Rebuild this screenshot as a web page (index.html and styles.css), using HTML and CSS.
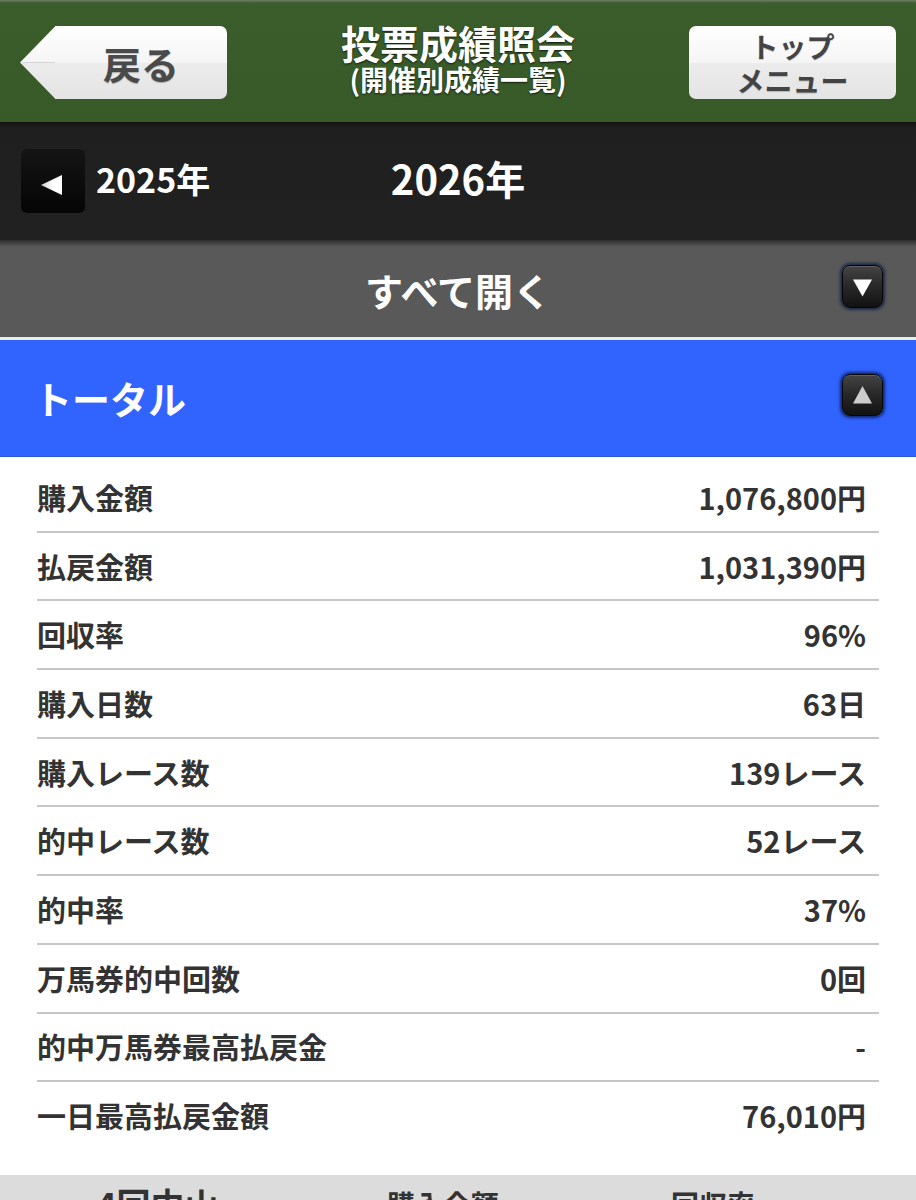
FILE: index.html
```html
<!DOCTYPE html>
<html lang="ja">
<head>
<meta charset="utf-8">
<title>投票成績照会</title>
<link rel="stylesheet" href="styles.css">
</head>
<body>
<header class="topbar">
  <a class="back-btn">
    <svg class="back-tip" width="35" height="73" viewBox="0 0 35 73">
      <defs>
        <linearGradient id="gloss" x1="0" y1="0" x2="0" y2="1">
          <stop offset="0" stop-color="#ffffff"/>
          <stop offset="0.5" stop-color="#f5f5f5"/>
          <stop offset="0.5" stop-color="#ececec"/>
          <stop offset="1" stop-color="#e4e4e4"/>
        </linearGradient>
      </defs>
      <polygon points="35.5,0 0,36.5 35.5,73" fill="url(#gloss)"/>
      <line x1="2" y1="36.5" x2="35" y2="36.5" stroke="#d4d4d4" stroke-width="1"/>
    </svg>
    <span class="back-body">戻る</span>
  </a>
  <div class="title">
    <div class="title-main">投票成績照会</div>
    <div class="title-sub">(開催別成績一覧)</div>
  </div>
  <a class="menu-btn"><span>トップ</span><span>メニュー</span></a>
</header>

<div class="yearbar">
  <div class="year-prev">
    <span class="prev-btn">
      <svg width="64" height="64" viewBox="0 0 64 64">
        <defs>
          <linearGradient id="triw" x1="0" y1="0" x2="1" y2="0">
            <stop offset="0" stop-color="#d0d0d0"/>
            <stop offset="0.6" stop-color="#ffffff"/>
            <stop offset="1" stop-color="#ffffff"/>
          </linearGradient>
        </defs>
        <polygon points="41,26 20,36 41,46" fill="url(#triw)"/>
      </svg>
    </span>
    <span class="year-prev-label">2025年</span>
  </div>
  <div class="year-current">2026年</div>
  <div class="year-next"></div>
</div>

<div class="expand-bar">
  <span class="expand-spacer"></span>
  <span class="expand-label">すべて開く</span>
  <span class="expand-toggle">
    <span class="toggle-btn">
      <svg width="41" height="43" viewBox="0 0 41 43">
        <polygon points="11,14.5 30,14.5 20.5,31.5" fill="#ffffff"/>
      </svg>
    </span>
  </span>
</div>

<div class="total-bar">
  <span class="total-label">トータル</span>
  <span class="toggle-btn toggle-up">
    <svg width="41" height="42" viewBox="0 0 41 42">
      <polygon points="11,29.5 30,29.5 20.5,12" fill="#cdcdcd"/>
    </svg>
  </span>
</div>

<dl class="stats">
  <div class="stat-row"><dt>購入金額</dt><dd>1,076,800円</dd></div>
  <div class="stat-row"><dt>払戻金額</dt><dd>1,031,390円</dd></div>
  <div class="stat-row"><dt>回収率</dt><dd>96%</dd></div>
  <div class="stat-row"><dt>購入日数</dt><dd>63日</dd></div>
  <div class="stat-row"><dt>購入レース数</dt><dd>139レース</dd></div>
  <div class="stat-row"><dt>的中レース数</dt><dd>52レース</dd></div>
  <div class="stat-row"><dt>的中率</dt><dd>37%</dd></div>
  <div class="stat-row"><dt>万馬券的中回数</dt><dd>0回</dd></div>
  <div class="stat-row"><dt>的中万馬券最高払戻金</dt><dd>-</dd></div>
  <div class="stat-row"><dt>一日最高払戻金額</dt><dd>76,010円</dd></div>
</dl>

<div class="meet-bar">
  <span class="meet-name">4回中山</span>
  <span class="meet-col">購入金額</span>
  <span class="meet-col">回収率</span>
  <span></span>
</div>
</body>
</html>
```

FILE: styles.css
```css
* { box-sizing: border-box; }

html, body {
  margin: 0;
  padding: 0;
  background: #ffffff;
}

body {
  width: 916px;
  font-family: "Noto Sans CJK JP", "Noto Sans", sans-serif;
  font-weight: 700;
  color: #333333;
}

a { text-decoration: none; }

/* ---------- header ---------- */
.topbar {
  height: 122px;
  display: flex;
  justify-content: space-between;
  align-items: flex-start;
  padding: 22px 20px 0;
  background: linear-gradient(#6e7d66 0, #3b5c2b 3px, #385a28 100%);
}

.back-btn {
  margin-top: 4px;
  display: flex;
  width: 207px;
  height: 73px;
}

.back-tip {
  display: block;
  flex: none;
}

.back-body {
  flex: 1;
  display: flex;
  align-items: center;
  justify-content: center;
  padding-top: 1px;
  border-radius: 0 7px 7px 0;
  background: linear-gradient(#ffffff 0, #f5f5f5 50%, #ececec 50%, #e4e4e4 100%);
  color: #4a4a4a;
  font-size: 38px;
  line-height: 1;
  text-shadow: 0 1px 1px rgba(0, 0, 0, 0.25);
}

.title {
  text-align: center;
  color: #ffffff;
  text-shadow: 0 1px 2px rgba(0, 0, 0, 0.7);
}

.title-main {
  font-size: 39px;
  line-height: 40px;
}

.title-sub {
  font-size: 28px;
  line-height: 34px;
}

.menu-btn {
  margin-top: 4px;
  width: 207px;
  height: 73px;
  display: flex;
  flex-direction: column;
  align-items: center;
  justify-content: center;
  border-radius: 7px;
  background: linear-gradient(#ffffff 0, #f5f5f5 50%, #ececec 50%, #e4e4e4 100%);
  color: #444444;
  font-size: 28px;
  line-height: 34px;
  text-shadow: 0 1px 1px rgba(0, 0, 0, 0.2);
}

/* ---------- year bar ---------- */
.yearbar {
  height: 118px;
  display: grid;
  grid-template-columns: 1fr auto 1fr;
  align-items: center;
  background: linear-gradient(#121212 0, #1f1f1f 6px, #212121 100%);
  color: #ffffff;
}

.year-prev {
  display: flex;
  align-items: center;
  gap: 11px;
  padding-left: 21px;
}

.prev-btn {
  display: block;
  width: 64px;
  height: 64px;
  border-radius: 6px;
  background: linear-gradient(#141414, #050505);
}

.prev-btn svg { display: block; }

.year-prev-label {
  font-size: 34px;
  line-height: 1;
  padding-bottom: 4px;
}

.year-current {
  font-size: 40px;
  line-height: 1;
  padding-bottom: 6px;
}

/* ---------- expand bar ---------- */
.expand-bar {
  height: 100px;
  display: grid;
  grid-template-columns: 1fr auto 1fr;
  align-items: center;
  background: linear-gradient(#2e2e2e 0, #595959 7px, #595959 100%);
  border-bottom: 3px solid #ececec;
  color: #ffffff;
}

.expand-label {
  font-size: 38px;
  line-height: 1;
  padding-top: 2px;
}

.expand-toggle {
  display: flex;
  justify-content: flex-end;
  padding-right: 33px;
  padding-bottom: 5px;
}

.toggle-btn {
  display: block;
  width: 41px;
  height: 43px;
  border-radius: 8px;
  background: linear-gradient(#444444 0, #2a2a2a 45%, #121212 100%);
  border: 1px solid #050505;
  box-shadow: 0 0 3px 2px rgba(16, 34, 70, 0.85), inset 0 1px 0 rgba(255, 255, 255, 0.15);
}

.toggle-btn svg { display: block; margin: -1px; }

/* ---------- total bar ---------- */
.total-bar {
  height: 117px;
  display: flex;
  justify-content: space-between;
  align-items: center;
  padding: 0 33px 0 34px;
  background: #3164fe;
  border-bottom: 1px solid #2c57d6;
  color: #ffffff;
}

.total-label {
  font-size: 38px;
  line-height: 1;
}

.toggle-up {
  height: 42px;
  margin-bottom: 6px;
  box-shadow: 0 0 3px 2px rgba(10, 30, 90, 0.85), inset 0 1px 0 rgba(255, 255, 255, 0.15);
}

/* ---------- stats list ---------- */
.stats {
  margin: 0 37px;
  padding: 7px 0 26px;
}

.stat-row {
  height: 68.7px;
  display: flex;
  justify-content: space-between;
  align-items: center;
  border-bottom: 2px solid #c6c6c6;
}

.stat-row:last-child {
  height: 66.7px;
  border-bottom: none;
}

.stat-row dt,
.stat-row dd {
  margin: 0;
  font-size: 29px;
  line-height: 1;
  color: #333333;
}

.stat-row dd {
  padding-right: 13px;
}

/* ---------- next meeting bar ---------- */
.meet-bar {
  height: 70px;
  display: grid;
  grid-template-columns: 315px 256px 284px 1fr;
  align-items: start;
  padding-top: 12px;
  background: #dcdcdc;
  color: #333333;
}

.meet-name {
  text-align: center;
  font-size: 34px;
  line-height: 1;
}

.meet-col {
  text-align: center;
  font-size: 28px;
  line-height: 1;
  padding-top: 3px;
}
```
